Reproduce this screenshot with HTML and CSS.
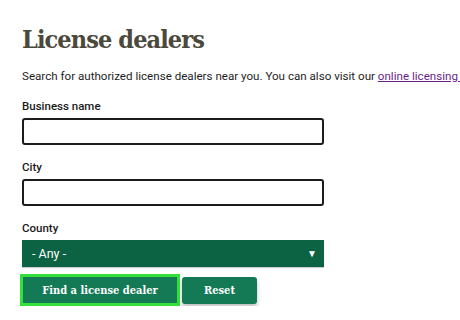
FILE: index.html
```html
<!DOCTYPE html>
<html>
<head>
<meta charset="utf-8">
<link rel="stylesheet" href="styles.css">
</head>
<body>
<main class="page">
  <h1 class="title">License dealers</h1>
  <p class="intro">Search for authorized license dealers near you. You can also visit our <a href="#" class="link">online licensing system</a></p>
  <form class="form">
    <div class="field">
      <label class="label">Business name</label>
      <div class="input"></div>
    </div>
    <div class="field">
      <label class="label">City</label>
      <div class="input"></div>
    </div>
    <div class="field">
      <label class="label">County</label>
      <div class="select"><span>- Any -</span><span class="arrow">▼</span></div>
    </div>
    <div class="actions">
      <div class="btn-focus"><span class="btn primary">Find a license dealer</span></div>
      <span class="btn reset">Reset</span>
    </div>
  </form>
</main>
</body>
</html>
```
FILE: styles.css
```css
html, body {
  margin: 0;
  padding: 0;
  background: #fff;
  overflow: hidden;
}
.page {
  padding: 24px 0 0 22px;
  width: 438px;
  overflow: hidden;
  font-family: Roboto, "Liberation Sans", sans-serif;
  color: #1e1e1e;
}
.title {
  margin: 0;
  font-family: "DejaVu Serif Condensed", "DejaVu Serif", serif;
  font-weight: bold;
  font-size: 25px;
  line-height: 32px;
  color: #4b483c;
  letter-spacing: -0.9px;
}
.intro {
  margin: 12px 0 0 0;
  font-size: 11.6px;
  line-height: 16px;
  white-space: nowrap;
}
.link {
  color: #6a1f8a;
  text-decoration: underline;
}
.form {
  display: flex;
  flex-direction: column;
  margin-top: 15px;
  width: 302px;
}
.field {
  display: flex;
  flex-direction: column;
  margin-bottom: 15px;
}
.label {
  font-size: 11.5px;
  font-weight: 500;
  line-height: 15px;
  margin-bottom: 4px;
  color: #1a1a1a;
}
.input {
  height: 23px;
  border: 2px solid #1c1c1c;
  border-radius: 3px;
  background: #fff;
}
.select {
  height: 27px;
  background: #0b6343;
  color: #fff;
  display: flex;
  align-items: center;
  justify-content: space-between;
  padding: 0 7px 0 10px;
  font-size: 12.5px;
  box-shadow: 0 1px 1px rgba(0,0,0,0.2);
}
.arrow {
  font-size: 10px;
}
.actions {
  display: flex;
  align-items: center;
  gap: 2px;
  margin-left: -2px;
  margin-top: -8px;
}
.btn-focus {
  border: 3px solid #34e03a;
  display: flex;
}
.btn {
  display: flex;
  align-items: center;
  justify-content: center;
  color: #fff;
  font-family: "DejaVu Serif Condensed", "DejaVu Serif", serif;
  font-weight: bold;
  font-size: 11px;
  background: #137a55;
}
.primary {
  width: 154px;
  height: 26px;
}
.reset {
  width: 75px;
  height: 27px;
  border-radius: 3px;
  box-shadow: 0 3px 4px rgba(0,0,0,0.25);
}
```
